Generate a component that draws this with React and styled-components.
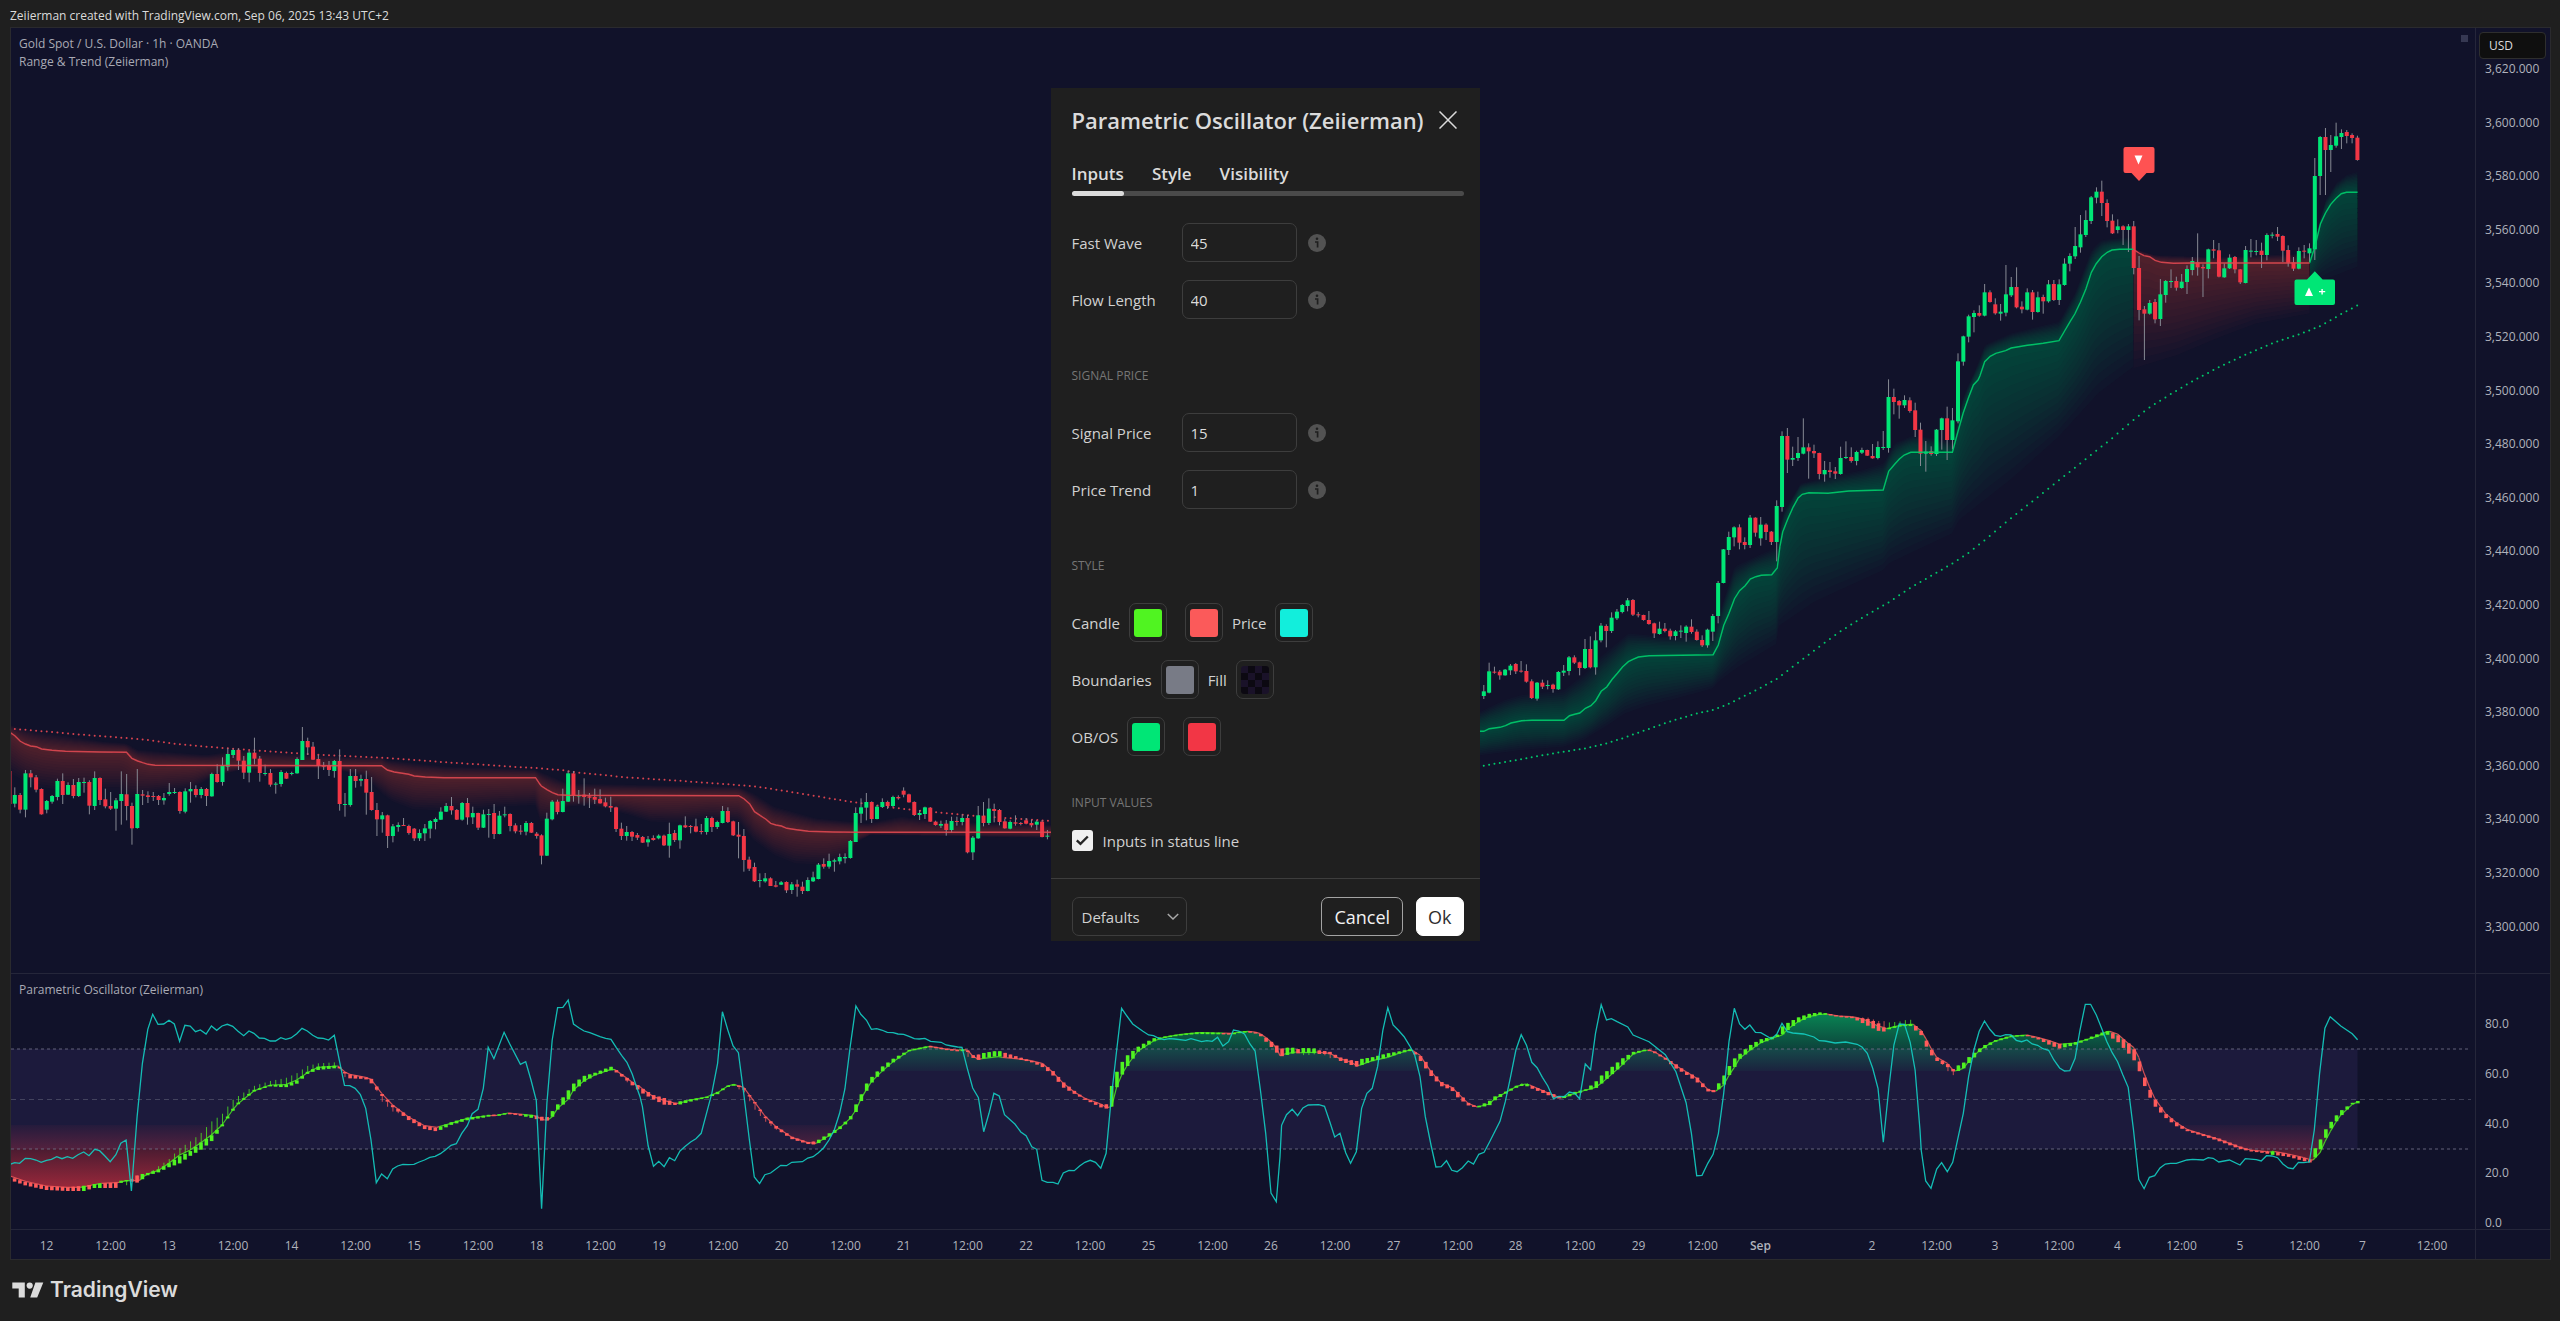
import React, { useState } from 'react';
import styled, { createGlobalStyle } from 'styled-components';

const GlobalStyle = createGlobalStyle`
  * { box-sizing: border-box; }
  body { margin: 0; background: #1f1f1f; font-family: "Open Sans", "Noto Sans", sans-serif; }
  button, input, select { font-family: inherit; }
`;

const UP = '#00e676';
const DOWN = '#f23645';
const OSC_UP = '#4ff321';
const OSC_DOWN = '#ff5b5b';

/* ---------- page frame ---------- */

const Page = styled.div`
  display: grid;
  grid-template-rows: 27px 1fr 61px;
  min-height: 100vh;
`;

const Credit = styled.header`
  display: flex;
  align-items: center;
  padding: 4px 10px 0;
  font-size: 12px;
  line-height: 16px;
  font-weight: 500;
  color: #dbdbdb;
`;

const ChartFrame = styled.main`
  position: relative;
  display: grid;
  grid-template-columns: 1fr 75px;
  grid-template-rows: 945fr 256fr 30px;
  margin: 0 9px 0 10px;
  border: 1px solid #2a2a2e;
  background: #11122a;
`;

const Pane = styled.section`
  position: relative;
  min-height: 0;
  border-top: ${(p) => (p.$divided ? '1px solid #25263a' : 'none')};
`;

const AxisPane = styled(Pane)`
  border-left: 1px solid #25263a;
`;

const Plot = styled.svg`
  position: absolute;
  inset: 0;
  display: block;
  width: 100%;
  height: 100%;
`;

const AxisPlot = styled(Plot)`
  overflow: visible;
`;

const AxisText = styled.text`
  font-family: "Open Sans", "Noto Sans", sans-serif;
  font-size: 12px;
  fill: #b0b2bc;
  font-weight: ${(p) => (p.$strong ? 600 : 500)};
`;

const Legend = styled.div`
  position: absolute;
  top: 7px;
  left: 8px;
  font-size: 12px;
  line-height: 18px;
  font-weight: 500;
  color: #a9aab5;
`;

const CurrencyButton = styled.button`
  position: absolute;
  top: 4px;
  left: 3px;
  width: 67px;
  height: 27px;
  padding: 0 9px;
  border: 1px solid #2e2e2e;
  border-radius: 4px;
  background: #0f0f0f;
  color: #dbdbdb;
  font-size: 12px;
  line-height: 16px;
  font-weight: 500;
  text-align: left;
`;

const PaneMark = styled.span`
  position: absolute;
  top: 7px;
  right: 7px;
  width: 7px;
  height: 7px;
  background: #363852;
`;

const Footer = styled.footer`
  display: flex;
  align-items: center;
  gap: 6px;
  padding: 0 12px 1px;
  color: #dbdbdb;
  font-family: Inter, sans-serif;
  font-size: 21px;
  line-height: 24px;
  font-weight: 600;
`;

/* ---------- settings dialog ---------- */

const Dialog = styled.div`
  position: absolute;
  top: 60px;
  left: calc(50% - 230px);
  width: 429px;
  background: #1f1f1f;
  color: #d1d1d1;
`;

const DialogMain = styled.div`
  padding: 17px 16px 27px 21px;
`;

const TitleRow = styled.div`
  display: flex;
  align-items: center;
  justify-content: space-between;
  padding-right: 7px;
`;

const Title = styled.h1`
  margin: 0;
  font-size: 22px;
  line-height: 30px;
  font-weight: 600;
  color: #dbdbdb;
`;

const CloseButton = styled.button`
  display: flex;
  padding: 0;
  border: 0;
  background: none;
  color: #dbdbdb;
`;

const Tabs = styled.div`
  position: relative;
  display: flex;
  gap: 28px;
  margin: 27px 0 27px;
  &::before {
    content: '';
    position: absolute;
    left: 0;
    right: 0;
    bottom: 0;
    height: 5px;
    border-radius: 3px;
    background: #4a4a4a;
  }
`;

const Tab = styled.button`
  position: relative;
  padding: 0 0 10px;
  border: 0;
  background: none;
  color: #dbdbdb;
  font-size: 17px;
  line-height: 24px;
  font-weight: 600;
  &::after {
    content: '';
    position: absolute;
    left: 0;
    right: 0;
    bottom: 0;
    height: 5px;
    border-radius: 3px;
    background: ${(p) => (p['aria-selected'] ? '#dbdbdb' : 'transparent')};
  }
`;

const Rows = styled.div`
  display: flex;
  flex-direction: column;
  gap: 18px;
`;

const SectionTitle = styled.h2`
  margin: ${(p) => (p.$compact ? '38px 0 18px' : '48px 0 28px')};
  font-size: 12px;
  line-height: 18px;
  font-weight: 500;
  color: #767676;
`;

const FieldRow = styled.div`
  display: grid;
  grid-template-columns: 110px 115px 18px;
  align-items: center;
  column-gap: 0;
  & > svg { margin-left: 11px; }
`;

const Label = styled.label`
  font-size: 15px;
  line-height: 20px;
  font-weight: 500;
`;

const NumberInput = styled.input`
  width: 100%;
  height: 39px;
  padding: 0 8px;
  border: 1px solid #3d3d3d;
  border-radius: 7px;
  background: transparent;
  color: #dbdbdb;
  font-size: 15px;
  font-weight: 500;
`;

const SwatchRow = styled.div`
  display: flex;
  align-items: center;
  gap: 9px;
  font-size: 15px;
  line-height: 20px;
  font-weight: 500;
`;

const Swatch = styled.button`
  display: flex;
  align-items: center;
  justify-content: center;
  width: 38px;
  height: 39px;
  padding: 0;
  border: 1px solid #3d3d3d;
  border-radius: 7px;
  background: none;
  & + & { margin-left: 9px; }
  &::before {
    content: '';
    width: 28px;
    height: 28px;
    border-radius: 3px;
    background: ${(p) => p.$fill};
  }
`;

const CheckLabel = styled.label`
  display: flex;
  align-items: center;
  gap: 10px;
  height: 21px;
  font-size: 15px;
  line-height: 20px;
  font-weight: 500;
`;

const CheckMark = styled.span`
  position: relative;
  width: 21px;
  height: 21px;
  & > svg { position: absolute; inset: 0; pointer-events: none; }
`;

const Checkbox = styled.input`
  appearance: none;
  display: block;
  width: 21px;
  height: 21px;
  margin: 0;
  border-radius: 3px;
  background: #f0f0f0;
`;

const DialogFooter = styled.div`
  display: flex;
  align-items: center;
  gap: 13px;
  padding: 18px 16px 5px 21px;
  border-top: 1px solid #3d3d3d;
`;

const SelectWrap = styled.div`
  position: relative;
  margin-right: auto;
  & > svg { position: absolute; right: 8px; top: 16px; pointer-events: none; }
`;

const Select = styled.select`
  appearance: none;
  display: block;
  width: 115px;
  height: 39px;
  padding: 0 9px;
  border: 1px solid #3d3d3d;
  border-radius: 7px;
  background: transparent;
  color: #d1d1d1;
  font-size: 15px;
  font-weight: 500;
`;

const ActionButton = styled.button`
  height: 39px;
  padding: 0 ${(p) => (p.$primary ? 11 : 12)}px;
  border: 1px solid ${(p) => (p.$primary ? '#ffffff' : '#a3a3a3')};
  border-radius: 7px;
  background: ${(p) => (p.$primary ? '#ffffff' : 'transparent')};
  color: ${(p) => (p.$primary ? '#2e2e2e' : '#f2f2f2')};
  font-size: 18px;
  font-weight: 500;
`;

/* ---------- data ---------- */

const STEP = 5.3255;
const lerp = (a, b, t) => a + (b - a) * t;

/* Each candle: direction, body top, body bottom, wick top, wick bottom (thirds of a unit). */
const CANDLE_RUNS = [
  { x: 14.8, y: 690, bars: `
g315,341,292,352 r315,359,309,370 g250,359,240,382 r250,262,240,292 r262,299,255,307 r297,373,295,374 g333,359,330,370 g318,335,315,341
g273,321,266,331 r273,315,250,342 g285,314,277,315 r285,318,267,325 g276,318,264,321 g276,277,263,308 r276,347,271,373 g264,348,244,360
r264,330,262,345 r328,349,296,355 r348,356,306,360 g331,356,324,422 g312,333,244,404 r313,348,252,391 r348,415,338,464 g312,414,237,416
r313,317,300,345 r316,321,304,339 r318,320,306,333 r318,330,315,345 g324,331,309,344 g306,312,279,317 g306,307,294,312 r306,363,304,371
g304,365,295,370 g297,304,276,338 r297,315,286,322 g297,315,291,325 r297,318,294,348 g252,319,248,320 r252,276,223,278 g227,276,202,287
g192,230,175,242 g180,195,176,204 r180,212,175,240 r212,248,198,267 g188,248,182,277 r188,206,143,223 r206,249,198,275 g249,250,224,257
r249,284,237,290 g281,282,276,311 g246,282,240,290 r249,266,245,267 g249,250,245,256 g207,250,202,251 g153,210,111,210 r153,172,143,195
r170,209,156,210 r207,227,195,267 r227,229,216,240 r226,240,213,258 g213,243,210,263 r213,342,178,362 g342,343,309,380 g258,345,237,350
r258,273,237,293 g267,272,254,289 r267,308,242,374 r306,360,261,362 r360,388,339,438 g376,388,366,428 r376,438,374,474 g409,438,402,457
g405,411,397,425 r405,406,384,407 r408,429,404,434 r416,445,414,453 g429,445,418,453 g415,430,402,453 g393,416,390,445 g387,396,383,418
g365,389,352,390 g348,365,339,366 r348,361,321,374 r360,389,357,390 g339,389,336,392 r339,382,324,404 g369,382,350,402 r369,413,368,420
g373,413,359,414 g372,374,357,443 r369,432,342,447 g377,432,363,433 g373,376,350,382 r372,408,370,424 r406,424,400,430 r422,425,405,434
g399,425,393,436 r399,428,396,429 r431,438,426,446` },
  { x: 541.5, y: 690, bars: `
r436,497,433,523 g386,497,368,498 g335,388,330,391 r335,366,329,373 g333,366,296,367 g250,335,242,336 r250,317,243,335 g316,319,300,341
r314,321,265,347 r319,323,309,354 r321,329,296,342 r327,340,298,341 r337,349,323,352 r348,353,320,366 r352,417,350,426 r416,438,398,450
g426,438,408,452 r426,440,423,453 r435,443,429,450 r441,458,438,459 g448,457,438,470 r444,450,436,452 g437,445,433,448 r437,466,434,468
g432,467,398,503 r429,450,420,456 g406,451,404,476 r406,412,379,414 r408,410,405,430 r409,425,386,427 r423,426,402,433 g384,426,378,434
r384,411,380,426 g396,411,392,417 g363,399,348,400 r363,396,352,399 r394,436,392,438 r434,440,396,505 r438,510,417,545 r509,536,500,543
r531,574,518,576 g570,573,550,592 g565,574,549,578 r565,588,562,588 r586,590,573,592 g577,584,573,585 r576,601,574,609 g583,600,576,612
r583,590,569,620 r590,603,575,612 g570,603,562,604 g562,574,545,576 g524,567,519,568 r522,530,505,536 g513,530,491,536 g511,515,506,545
g501,514,491,523 g501,505,490,520 g453,504,450,506 g369,456,352,456 g352,371,325,399 g336,353,309,391 r336,387,334,399 g350,387,345,388
g336,351,325,354 r336,348,332,357 g321,348,317,352 r321,325,316,329 r302,314,292,322 r313,337,311,338 r336,375,334,378 g369,375,360,390
g352,372,350,387 r353,395,351,396 r395,405,392,407 g402,407,392,414 r401,420,390,437 g393,420,380,428 r393,396,380,407 g384,396,373,406
r384,487,375,490 g443,487,438,510 g376,445,348,446 r377,399,336,409 g356,399,325,405 r357,363,341,397 r360,396,357,406 r394,415,386,416
g396,416,391,418 r397,401,376,407 r399,402,396,406 r391,401,384,403 r399,406,389,412 g395,404,390,420 r395,441,391,442 g437,439,420,448` },
  { x: 1483.8, y: 380, bars: `
g934,948,915,957 g874,938,848,940 r875,878,860,881 r875,886,870,899 g869,886,867,887 g857,871,852,885 r852,874,849,882 r872,875,843,878
r873,905,853,908 r904,954,898,957 g908,956,906,962 r908,920,899,927 g915,917,901,928 r914,927,911,938 g876,928,873,930 g872,878,855,888
g832,873,828,886 r832,848,826,852 r847,864,845,886 g807,864,777,867 r807,862,769,865 g781,862,755,884 g737,781,729,787 r738,753,733,802
g713,753,697,759 g695,715,687,720 g675,696,672,700 g661,678,654,694 r660,704,657,708 r703,706,696,712 r705,720,704,722 r720,732,693,734
r730,760,728,774 g746,762,725,764 r746,753,729,757 r752,769,746,779 g754,768,750,781 g752,755,736,774 g740,759,736,785 r740,756,718,761
r755,780,748,782 r780,796,766,801 g749,796,746,803 g708,755,702,783 g609,708,603,730 g508,609,507,610 g471,510,455,525 g442,472,439,499
r442,488,433,508 r486,495,472,508 g413,495,405,504 r413,458,412,470 g434,475,411,497 r434,456,430,480 r455,486,453,495 g378,486,361,544
g168,381,154,395 r168,239,144,279 g234,239,200,258 g219,234,171,243 g202,221,115,223 r202,214,190,296 r213,220,194,234 r219,282,218,298
g270,283,243,305 r271,276,246,293 r274,281,261,297 g234,282,200,284 g231,234,184,237 r231,243,202,248 g216,243,212,256 g210,218,203,222
r210,227,209,228 r228,235,192,236 g201,234,184,238 g201,204,153,210 g51,204,-2,218 r51,66,26,103 r63,76,60,116 g60,76,46,84
r61,93,52,98 r91,150,68,171 r149,221,128,258 g215,221,183,275 r214,222,199,227 g149,222,147,228 g115,150,113,209 r115,180,80,240
g121,180,84,208` },
  { x: 1958, y: 20, bars: `
g1024,1204,1000,1210 g949,1025,947,1037 g889,950,884,967 g879,891,871,937 r879,887,856,890 g817,887,792,889 r817,846,811,848 r853,880,835,884
g875,881,852,902 g823,878,735,889 g801,826,771,831 r801,862,742,865 r860,868,844,880 g817,869,805,871 r817,876,810,899 g832,876,815,878
r831,844,824,881 g793,844,780,848 r792,840,780,843 g793,840,778,855 g731,795,715,797 g708,731,700,754 g678,709,621,717 g643,682,585,698
g600,645,571,651 g532,603,528,612 g515,533,502,550 r515,549,482,588 r549,603,538,622 r602,640,583,642 g619,630,598,640 r619,630,616,675
g619,630,612,696 r619,744,603,763 r744,870,708,901 r868,881,858,1020 g849,881,840,884 r846,898,837,910 g823,897,777,918 g783,825,780,848
g783,784,748,804 r783,803,770,812 g785,804,762,806 g747,786,736,822 g723,750,711,766 r727,742,640,767 r741,745,733,831 g688,747,686,775
r688,692,660,715 r691,770,669,772 g745,772,730,773 g713,745,703,747 r711,748,708,760 r748,787,747,792 g690,789,678,790 g692,695,657,712
g693,694,660,706 r692,705,668,744 g645,705,640,721 g644,645,637,655 r642,650,621,663 r648,692,646,726 r690,728,676,740 r727,746,711,753
g693,746,682,748 r692,695,675,715 g685,700,670,726 g468,688,414,720 g351,468,348,525 r351,390,324,525 g375,390,345,456 g349,377,308,383
g339,351,328,387 r336,348,330,370 r345,354,340,370 r353,420,347,422` },
];

const candles = CANDLE_RUNS.flatMap((run) =>
  run.bars.trim().split(/\s+/).map((bar, i) => {
    const [top, bottom, high, low] = bar.slice(1).split(',').map((v) => run.y + v / 3);
    return { x: run.x + i * STEP, up: bar[0] === 'g', top, bottom, high, low };
  })
);

/* Turns "x,y x,y ..." traced on a local grid into chart units. */
const trace = (x0, sx, y0, text) =>
  text.trim().split(/\s+/).map((pair) => {
    const [x, y] = pair.split(',').map(Number);
    return [x0 + x / sx, y0 + y / 3];
  });

const A = (t) => trace(0, 2.904, 690, t);
const B = (t) => trace(540, 2.904, 690, t);
const C = (t) => trace(1470, 2.904, 380, t);
const D = (t) => trace(1940, 2.529, 20, t);

const yAt = (pts, x) => {
  if (x <= pts[0][0]) return pts[0][1];
  for (let i = 1; i < pts.length; i += 1) {
    if (x <= pts[i][0]) {
      const [xa, ya] = pts[i - 1];
      const [xb, yb] = pts[i];
      return xb === xa ? yb : lerp(ya, yb, (x - xa) / (xb - xa));
    }
  }
  return pts[pts.length - 1][1];
};

const TRENDS = [
  {
    up: false,
    line: [
      ...A('30,128 43,137 59,154 74,162 89,168 105,170 121,177 151,181 190,184 290,186 367,187 383,205 400,213 414,218 430,223 450,226 1108,227 1125,240 1145,246 1187,253 1203,258 1235,261 1290,263 1555,263'),
      ...B('0,283 4,288 20,299 36,308 52,314 80,316 577,317 593,327 609,342 623,365 640,377 655,387 670,400 685,405 701,408 717,415 745,419 779,424 850,426 917,427 1520,427'),
    ],
    lower: [
      ...A('30,250 74,275 105,290 180,300 350,300 367,325 450,310 560,295 620,260 700,240 900,235 980,240 1060,260 1108,310 1140,335 1200,358 1300,362 1450,350 1555,345'),
      ...B('0,395 36,390 80,350 150,345 260,375 320,395 400,398 500,385 577,395 620,450 680,495 740,520 830,525 900,500 917,460 960,435 1520,445'),
    ],
    upper: [
      ...A('30,105 105,125 300,155 367,160 400,180 600,195 700,180 1000,200 1108,200 1125,210 1300,230 1555,238'),
      ...B('0,245 80,280 300,285 577,290 620,310 680,350 800,385 950,400 1050,380 1150,392 1300,400 1520,405'),
    ],
  },
  {
    up: true,
    line: [
      ...C('0,1054 40,1054 56,1046 87,1042 103,1037 119,1029 150,1022 180,1021 273,1021 289,1007 304,1003 319,999 335,985 351,977 365,962 381,934 397,921 413,898 428,880 443,861 460,845 473,838 489,831 520,827 706,824 721,795 737,736 752,700 768,656 783,632 799,617 814,597 830,590 846,586 876,584 892,564 900,500 908,456 922,419 938,382 953,354 965,343 984,338 1040,340 1100,333 1200,330 1216,274 1232,254 1247,237 1261,225 1280,217 1401,217 1408,190 1417,155 1432,100 1447,55 1462,15'),
      ...D('96,1080 101,1068 113,1025 127,1009 141,1000 166,992 180,984 221,976 261,970 301,962 315,933 329,905 341,882 355,847 369,807 383,757 395,731 409,710 423,697 435,690 455,688 489,688'),
    ],
    lower: [
      ...C('0,1130 150,1110 273,1100 330,1080 400,1035 450,1000 520,975 600,955 706,925 721,905 780,860 892,790 894,740 1000,665 1200,570 1216,550 1400,460 1420,420'),
      ...D('177,1380 300,1250 400,1120 489,1040'),
    ],
    upper: [
      ...C('0,1010 100,960 150,945 273,930 335,880 380,830 460,760 560,770 706,770 721,710 768,560 830,530 892,500 908,400 960,310 1140,270 1201,250 1232,190 1290,165 1400,185 1432,50'),
      ...D('96,1030 113,975 180,940 301,905 341,820 383,690 409,660 489,650'),
    ],
  },
  {
    up: false,
    line: D('489,688 503,699 516,707 530,710 544,721 560,727 590,730 640,729 935,729'),
    lower: D('489,1045 600,1005 700,955 800,910 935,880'),
    upper: D('489,685 544,705 700,712 935,700'),
  },
  {
    up: true,
    line: D('935,728 948,680 962,612 975,579 988,553 1002,535 1015,521 1028,517 1056,517'),
    lower: D('935,780 936,800 948,790 1056,740'),
    upper: D('935,700 948,650 975,540 1002,490 1028,465 1056,455'),
  },
];

const DOTTED = [
  { color: '#d8434f', pts: [
    ...A('43,117 105,122 182,129 260,136 367,144 430,150 507,161 600,170 738,181 862,190 940,195 1050,200 1125,204 1218,211 1311,218 1403,224 1500,231 1559,234'),
    ...B('4,235 67,241 113,248 250,262 400,272 547,283 623,289 700,301 840,325 933,340 1042,355 1150,367 1242,376 1350,384 1473,392'),
  ] },
  { color: '#00c86b', pts: [
    ...C('40,1157 119,1143 243,1120 335,1105 397,1090 443,1075 505,1052 582,1024 660,1000 706,990 752,971 830,931 892,896 953,848 1016,799 1077,753 1154,704 1216,667 1278,624 1340,587 1402,550 1447,519 1494,481 1556,427'),
    ...D('435,1255 489,1200 530,1162 584,1122 638,1084 706,1041 772,1004 840,970 920,938 962,918 1015,882 1056,856'),
  ] },
];

const O = (day, t) => trace(day, 2.45, 970, t);

const priceWave = [
  ...O(0, '25,583 36,578 48,580 62,565 75,566 88,570 101,577 114,571 126,568 139,560 152,566 165,560 178,565 191,554 205,546 218,557 232,538 244,542 257,558 270,575 284,554 296,520 309,510 322,663 336,440 349,280 362,178 374,133 387,163 401,162 414,151 427,162 440,214 453,166 466,168 479,185 491,180 505,192 518,168 531,181 544,168 557,163 570,169 583,184 597,197 610,183 622,190 635,204 648,205 662,213 675,213 688,203 700,208 713,204 727,191 740,175 753,183 766,196 779,204 792,205 805,210 819,196 832,275 844,346 857,347 870,355 883,374 896,415 909,510 922,638 935,612 949,626 962,597 974,588 987,583 1000,584 1014,583 1027,576 1040,570 1053,562 1066,559 1079,551 1092,539 1105,526 1118,521 1131,491 1145,467 1157,431 1171,418 1184,355 1196,232 1210,266 1235,187 1248,220 1275,283 1288,275 1301,330 1314,392 1327,716 1340,400 1353,210 1366,113 1379,112 1392,90 1405,162 1418,173 1431,183 1445,188 1470,200 1484,205 1497,208 1510,233 1523,256 1536,277 1549,312 1558,345'),
  ...O(640, '0,380 6,410 20,528 33,589 46,574 59,590 72,563 85,572 98,543 111,529 124,516 137,506 150,490 163,430 176,370 190,280 202,125 215,180 228,228 241,248 254,370 268,510 280,621 293,641 306,614 320,609 345,586 359,587 372,577 398,575 411,564 424,560 437,548 450,533 463,510 476,480 489,430 502,357 515,230 529,108 541,133 555,151 567,178 580,176 592,180 606,187 620,188 632,192 646,193 659,199 672,206 684,207 698,205 712,214 738,217 750,225 764,228 778,231 789,232 802,295 815,354 829,383 842,485 855,430 867,370 880,378 893,434 919,463 933,486 946,497 960,530 972,538 985,631 998,637 1012,637 1024,642 1037,609 1051,601 1064,602 1077,588 1090,577 1103,571 1116,577 1129,595 1142,550 1155,380 1168,240 1180,115 1193,138 1207,162 1232,184 1246,195 1258,197 1271,205 1284,209 1297,206 1310,207 1337,211 1350,206 1376,215 1389,212 1402,214 1415,202 1428,228 1442,215 1454,180 1467,183 1481,192 1494,221 1507,243 1520,360 1533,490 1546,669 1559,695'),
  ...O(1280, '0,560 4,466 16,434 30,418 43,437 56,414 69,405 95,404 109,409 122,455 134,501 147,490 161,548 173,580 187,545 200,415 213,370 226,355 239,290 252,180 264,113 277,165 290,181 304,200 317,226 330,255 343,320 356,440 370,525 382,591 395,590 408,572 421,601 434,605 447,593 461,573 474,582 487,553 500,547 513,517 539,454 552,395 565,320 578,240 591,194 604,226 617,277 630,293 643,322 656,348 670,386 683,379 696,380 709,366 722,370 734,386 748,282 761,299 773,190 787,104 800,150 812,146 826,155 852,171 865,195 904,215 918,229 944,254 970,305 995,398 1008,490 1021,617 1034,616 1048,580 1061,553 1074,490 1087,370 1100,215 1113,115 1126,162 1139,178 1151,165 1165,187 1178,188 1204,206 1217,193 1230,160 1243,185 1256,189 1283,192 1308,201 1321,212 1335,213 1360,219 1386,216 1414,223 1426,231 1439,250 1452,295 1465,355 1478,517 1492,350 1504,225 1517,162 1530,163 1544,217 1556,300'),
  ...O(1920, '0,480 3,540 14,633 27,655 41,597 53,578 67,605 80,577 106,430 119,320 132,240 145,184 158,153 171,178 184,196 197,199 210,194 223,195 236,211 249,215 262,210 275,222 288,226 301,236 315,241 328,270 342,294 354,303 367,302 380,265 392,180 405,103 418,103 432,135 445,175 458,215 471,248 484,275 497,315 510,352 523,480 536,628 549,656 562,622 575,617 588,594 601,582 614,580 628,580 654,570 668,568 694,570 706,563 718,565 732,576 758,570 784,585 797,566 824,569 836,573 849,557 862,558 876,563 889,582 902,594 914,596 927,577 940,578 954,576 966,480 979,310 992,175 1005,140 1031,168 1059,191 1072,209'),
];

/* Oscillator keys: x, y, direction from here on, body top offset, body bottom offset, wick offset. */
const waveKeys = [
  [0, '25,618,r,2,12 62,634,r,2,12 114,648,r,0,12 165,652,r,0,11 198,652,g,-4,11 211,649,r,-2,14 226,645,g,-2,9 249,640,r,0,14 284,638,r,0,16 293,637,g,-4,3 309,632,g,-2,2,16 320,632,r,-2,2 328,632,r,-10,4 337,632,r,-16,6,18 344,630,g,-16,-1 349,622,g,-10,6 362,612,g,-3,4 387,602,g,-3,6,-12 414,580,g,0,12,-12 440,555,g,4,26,-20 466,540,g,4,18,-25 492,518,g,0,22,-28 518,495,g,2,20,-40 544,465,g,0,6,-32 570,420,g,-2,4,-30 583,401,g,-2,3,-22 622,363,g,-3,2,-15 662,345,g,0,4,-12 700,344,g,0,8,-20 727,330,g,2,12,-20 753,308,g,-2,4,-20 779,292,g,-2,8,-12 819,289,g,-2,6,-12 828,288,r,-2,2 845,306,r,0,3,14 857,313,r,0,12 896,322,r,0,5 909,328,r,-4,10 935,370,r,0,6,22 962,405,r,0,6,18 1000,440,r,-3,9 1040,467,r,0,10 1070,472,r,2,12 1076,470,g,2,12 1105,460,g,-3,5 1145,445,g,-2,6 1190,438,g,-2,4 1200,437,r,-3,2 1218,436,g,-2,2 1245,429,r,-1,2 1280,433,g,0,5 1308,437,r,-2,8 1334,450,r,-8,4 1343,449,g,-8,2 1353,440,g,-15,2 1366,415,g,-10,5 1392,388,g,-25,2 1405,360,g,-18,5 1431,332,g,-14,4 1457,315,g,-6,2 1497,298,g,-8,3 1507,299,r,-2,5 1536,325,r,-2,6,12 1558,345,r,-2,10'],
  [640, '0,350,r,-2,12 7,358,r,-2,12 33,380,r,-5,8 60,392,r,-8,12 85,399,r,0,6 94,400,g,-5,5 124,390,g,-2,5 163,381,g,0,3 190,368,g,-2,5 215,348,g,-1,2 230,343,g,0,3 237,346,r,-2,2,10 254,352,r,0,3,10 280,395,r,-2,2,22 306,438,r,0,4,14 333,470,r,-3,5,10 372,502,r,-2,5 411,518,r,-2,4 432,520,g,-6,4 463,497,g,-6,4 489,474,g,-3,5 515,445,g,-2,6 529,420,g,-15,8 542,385,g,-10,10 555,358,g,-16,6 567,335,g,-12,5 592,305,g,-13,2 620,275,g,-8,3 659,242,g,-2,2 710,229,r,-2,3 750,237,r,-1,2 780,240,g,0,2 795,239,r,0,3 803,241,r,0,3,18 815,258,r,-2,5,5 829,268,r,-14,2,6 837,266,g,-16,0,10 878,260,g,-18,-2,12 888,262,r,-16,-1,10 920,266,r,-8,0 958,272,r,0,4 985,280,r,0,10 1010,305,r,-5,8 1037,340,r,-4,12 1064,366,r,-4,5 1090,385,r,0,3 1129,402,r,0,10 1142,412,r,-2,4 1150,412,g,-60,2 1156,408,g,-60,2 1168,350,g,-42,5 1180,315,g,-36,3 1194,285,g,-28,5 1220,243,g,-12,3 1258,213,g,-8,2 1284,202,g,-2,2 1320,194,g,-1,2 1370,188,g,-2,4 1415,189,g,-1,4 1430,189,r,0,3 1450,190,g,0,4 1470,186,g,-1,2 1490,184,r,-1,2 1507,186,r,0,3 1520,191,r,0,6 1535,204,r,0,12 1550,220,r,-2,14 1562,240,r,-12,10'],
  [1280, '0,257,r,-20,2 11,252,g,-18,6,18 30,248,g,-16,2,20 40,246,r,-6,6 50,248,g,-14,0,20 83,247,g,-12,2,18 90,246,r,-6,6 122,250,r,-5,2,18 147,266,r,-4,6 173,276,r,-6,8 187,286,r,-12,4,18 194,286,g,-18,2,8 226,272,g,-10,2,4 264,262,g,-12,0 290,250,g,-5,2 317,240,g,-3,3 326,242,r,0,3 343,256,r,0,14 356,280,r,-8,12 370,305,r,-5,12 395,340,r,-5,8 421,352,r,-2,8 434,368,r,-5,12 461,400,r,-2,6 483,411,g,-1,2 513,402,g,-8,5 526,386,g,-6,6 552,368,g,-2,4 578,350,g,-2,4 600,342,g,-2,3,-8 612,345,r,0,8 643,362,r,-3,6 670,376,r,-4,6,8 690,384,g,-3,3 722,370,g,-4,4 750,360,g,-2,2 773,352,g,-15,4 787,340,g,-22,2 813,312,g,-20,2 839,284,g,-18,2 865,252,g,-6,2 890,242,g,-2,2 903,240,r,-2,2 918,246,r,-2,3 944,265,r,-2,3 970,287,r,-5,8 995,305,r,0,8 1021,325,r,-5,10 1048,358,r,-2,6 1061,364,r,-2,3 1068,363,g,-10,2 1087,345,g,-25,2 1100,316,g,-25,2 1113,292,g,-25,2 1126,265,g,-12,3 1152,240,g,-14,2 1178,218,g,-10,2 1204,205,g,-4,4 1217,200,g,-2,2 1230,195,g,-24,0 1243,178,g,-18,4 1269,155,g,-12,3 1295,140,g,-8,4 1321,133,g,-6,2 1340,132,r,-2,2 1370,138,r,-1,2 1400,140,r,0,2 1414,143,r,0,8 1439,152,r,-6,14,-10 1465,168,r,-10,14,-15 1478,172,r,0,14,-20 1486,176,g,0,4,-18 1517,167,g,-2,3,-12 1544,163,g,0,4,-16 1552,163,r,-3,12 1566,178,r,0,12'],
  [1920, '2,180,r,0,12 14,205,r,2,20 27,235,r,0,18 41,262,r,0,10 67,280,r,0,10,20 80,299,r,0,4,18 86,303,g,-12,4,14 106,295,g,-15,2 119,275,g,-12,6 145,242,g,-5,6 158,230,g,-4,6 184,213,g,-2,3 223,199,g,-3,3 250,196,g,-1,2 262,195,r,-1,3 288,202,r,0,5 315,211,r,0,12 341,222,r,0,14 348,222,g,0,12 380,219,g,-2,6 405,210,g,-2,3 432,200,g,-6,2 458,185,g,-2,7 465,184,r,2,16 484,192,r,2,22 510,220,r,-2,28 523,232,r,0,34 536,262,r,4,34,20 549,310,r,6,32 562,350,r,4,28 575,385,r,0,22 601,430,r,0,12 628,458,r,-2,10 654,478,r,0,5 694,494,r,-2,4 732,508,r,-3,5 784,532,r,-3,5 810,540,r,0,4 849,545,r,0,5 857,546,g,-2,8,-10 869,545,r,0,10 902,552,r,0,8 940,563,r,0,10 958,570,r,0,8 963,570,g,-24,2 980,548,g,-35,-5 992,515,g,-32,-5 1005,485,g,-25,-5 1018,458,g,-18,0 1031,435,g,-12,4 1059,403,g,-4,0 1072,396,g,-3,4'],
].flatMap(([origin, text]) =>
  text.split(' ').map((key) => {
    const [x, y, dir, a, b, w = 0] = key.split(',');
    return { x: origin + x / 2.45, y: 970 + y / 3, up: dir === 'g', a: a / 3, b: b / 3, w: w / 3 };
  })
);

const waveBars = Array.from({ length: 441 }, (_, i) => {
  const x = 14.8 + i * STEP;
  let k = 0;
  while (k < waveKeys.length - 2 && waveKeys[k + 1].x <= x) k += 1;
  const p = waveKeys[k];
  const q = waveKeys[k + 1];
  const t = Math.min(1, Math.max(0, (x - p.x) / (q.x - p.x)));
  const at = (name) => lerp(p[name], q[name], t);
  return { x, up: p.up, y: at('y'), a: at('a'), b: at('b'), w: at('w') };
});

const TIMES = [
  ['12', 46.5], ['12:00', 110.5], ['13', 169], ['12:00', 233], ['14', 291.5], ['12:00', 355.5], ['15', 414], ['12:00', 478],
  ['18', 536.5], ['12:00', 600.5], ['19', 659], ['12:00', 723], ['20', 781.5], ['12:00', 845.5], ['21', 903.5], ['12:00', 967.5],
  ['22', 1026], ['12:00', 1090], ['25', 1148.5], ['12:00', 1212.5], ['26', 1271], ['12:00', 1335], ['27', 1393.5], ['12:00', 1457.5],
  ['28', 1515.5], ['12:00', 1580], ['29', 1638.5], ['12:00', 1702.5], ['Sep', 1760.5], ['2', 1872], ['12:00', 1936.5], ['3', 1995],
  ['12:00', 2059], ['4', 2117.5], ['12:00', 2181.5], ['5', 2240], ['12:00', 2304.5], ['7', 2362.5], ['12:00', 2432],
];

const pct = (value, total) => `${((value / total) * 100).toFixed(3)}%`;
const toPoints = (pts) => pts.map((p) => `${p[0].toFixed(1)},${p[1].toFixed(1)}`).join(' ');

/* ---------- chart parts ---------- */

const LAYERS = 14;

function GlowBand({ line, edge, up }) {
  const first = line[0][0];
  const last = line[line.length - 1][0];
  const xs = [];
  for (let x = first; x < last; x += STEP / 2) xs.push(x);
  xs.push(last);
  const base = xs.map((x) => [x, yAt(line, x)]);
  return Array.from({ length: LAYERS }, (_, k) => {
    const far = base.map(([x, y]) => [x, lerp(y, yAt(edge, x), (k + 1) / LAYERS)]).reverse();
    return (
      <polygon key={k} points={toPoints([...base, ...far])} fill={up ? UP : '#ff5252'} fillOpacity={up ? 0.025 : 0.023} />
    );
  });
}

function DottedLine({ pts, color }) {
  const dots = [];
  const last = pts[pts.length - 1][0];
  for (let x = pts[0][0]; x <= last + 1; x += STEP) dots.push([x, yAt(pts, x)]);
  return dots.map(([x, y]) => <circle key={x} cx={x} cy={y} r="1" fill={color} />);
}

function PricePlot() {
  return (
    <Plot viewBox="11 28 2464 945" preserveAspectRatio="none" role="img" aria-label="Gold Spot price chart">
      {TRENDS.map((t, i) => (
        <g key={i}>
          <GlowBand line={t.line} edge={t.lower} up={t.up} />
          <GlowBand line={t.line} edge={t.upper} up={t.up} />
        </g>
      ))}
      {DOTTED.map((d) => <DottedLine key={d.color} {...d} />)}
      <rect x="9" y="771" width="2.5" height="33" fill={DOWN} />
      {candles.map((c) => (
        <g key={c.x}>
          <rect x={c.x - 0.5} y={c.high} width="1" height={c.low - c.high} fill="#868993" />
          <rect x={c.x - 2} y={c.top} width="4" height={Math.max(1, c.bottom - c.top)} fill={c.up ? UP : DOWN} />
        </g>
      ))}
      {TRENDS.map((t, i) => (
        <polyline key={i} points={toPoints(t.line)} fill="none" stroke={t.up ? '#00cf6d' : '#e04a52'} strokeWidth="1.4" strokeOpacity="0.9" />
      ))}
      <path d="M2125.5 147H2152.5Q2154.5 147 2154.5 149V171Q2154.5 173 2152.5 173H2146.5L2139 181L2131.5 173H2125.5Q2123.5 173 2123.5 171V149Q2123.5 147 2125.5 147Z" fill="#ff5252" />
      <path d="M2134.5 155.5H2142.5L2138.5 164.5Z" fill="#ffffff" />
      <path d="M2296.5 279.5H2307L2314.8 271.3L2322.6 279.5H2333Q2335 279.5 2335 281.5V303Q2335 305 2333 305H2296.5Q2294.5 305 2294.5 303V281.5Q2294.5 279.5 2296.5 279.5Z" fill={UP} />
      <path d="M2309 287.5L2313 296H2305ZM2321.4 289H2322.8V290.9H2325.2V292.3H2322.8V294.4H2321.4V292.3H2319V290.9H2321.4Z" fill="#ffffff" />
    </Plot>
  );
}

function OscillatorPlot() {
  const curve = toPoints(waveKeys.map((k) => [k.x, k.y]));
  return (
    <Plot viewBox="11 974 2464 255" preserveAspectRatio="none" role="img" aria-label="Parametric Oscillator">
      <defs>
        <linearGradient id="overbought" gradientUnits="userSpaceOnUse" x1="0" y1="1071" x2="0" y2="1012">
          <stop offset="0" stopColor={UP} stopOpacity="0.04" />
          <stop offset="1" stopColor={UP} stopOpacity="0.55" />
        </linearGradient>
        <linearGradient id="oversold" gradientUnits="userSpaceOnUse" x1="0" y1="1125" x2="0" y2="1187">
          <stop offset="0" stopColor={DOWN} stopOpacity="0.04" />
          <stop offset="1" stopColor={DOWN} stopOpacity="0.6" />
        </linearGradient>
        <clipPath id="above"><rect x="11" y="974" width="2464" height="97" /></clipPath>
        <clipPath id="below"><rect x="11" y="1125" width="2464" height="104" /></clipPath>
      </defs>
      <rect x="11" y="1049" width="2346.5" height="100" fill="#1c1a3c" />
      <g clipPath="url(#above)">
        <polygon points={`10,1071 ${curve} 2357.5,1071`} fill="url(#overbought)" />
      </g>
      <g clipPath="url(#below)">
        <polygon points={`10,1125 ${curve} 2357.5,1125`} fill="url(#oversold)" />
      </g>
      <g stroke="#6a6b80" strokeOpacity="0.6">
        <path d="M11 1049H2471M11 1149H2471" strokeWidth="1.6" strokeDasharray="3 3" />
        <path d="M11 1099.5H2471" strokeWidth="1" strokeDasharray="5 4" strokeOpacity="0.5" />
      </g>
      {waveKeys.slice(1).map((k, i) => (
        <line key={k.x} x1={waveKeys[i].x} y1={waveKeys[i].y} x2={k.x} y2={k.y} stroke={waveKeys[i].up ? OSC_UP : OSC_DOWN} strokeWidth="1.2" strokeOpacity="0.8" />
      ))}
      {waveBars.map((b) => (
        <g key={b.x} fill={b.up ? OSC_UP : OSC_DOWN}>
          <rect x={b.x - 2} y={b.y + b.a} width="3.6" height={Math.max(1.4, b.b - b.a)} />
          <rect x={b.x - 0.5} y={b.y + Math.min(b.w, b.a)} width="1" height={Math.abs(b.w) + 0.5} fillOpacity="0.75" />
        </g>
      ))}
      <polyline points={toPoints(priceWave)} fill="none" stroke="#14cfc3" strokeWidth="1.3" strokeOpacity="0.9" />
    </Plot>
  );
}

const InfoIcon = () => (
  <svg width="18" height="18" viewBox="0 0 18 18" aria-hidden="true">
    <circle cx="9" cy="9" r="9" fill="#525252" />
    <circle cx="9" cy="4.8" r="1.3" fill="#1f1f1f" />
    <path d="M7 8H9.6V13.5" fill="none" stroke="#1f1f1f" strokeWidth="1.7" />
  </svg>
);

function Field({ id, label, value }) {
  return (
    <FieldRow>
      <Label htmlFor={id}>{label}</Label>
      <NumberInput id={id} type="text" inputMode="numeric" defaultValue={value} />
      <InfoIcon />
    </FieldRow>
  );
}

function SettingsDialog() {
  const [tab, setTab] = useState('Inputs');
  return (
    <Dialog role="dialog" aria-labelledby="dialog-title">
      <DialogMain>
        <TitleRow>
          <Title id="dialog-title">Parametric Oscillator (Zeiierman)</Title>
          <CloseButton aria-label="Close">
            <svg width="18" height="18" viewBox="0 0 18 18">
              <path d="M0.5 0.5L17.5 17.5M17.5 0.5L0.5 17.5" stroke="currentColor" strokeWidth="1.5" />
            </svg>
          </CloseButton>
        </TitleRow>
        <Tabs role="tablist">
          {['Inputs', 'Style', 'Visibility'].map((name) => (
            <Tab key={name} role="tab" aria-selected={tab === name} onClick={() => setTab(name)}>{name}</Tab>
          ))}
        </Tabs>
        <Rows>
          <Field id="fast-wave" label="Fast Wave" value="45" />
          <Field id="flow-length" label="Flow Length" value="40" />
        </Rows>
        <SectionTitle>SIGNAL PRICE</SectionTitle>
        <Rows>
          <Field id="signal-price" label="Signal Price" value="15" />
          <Field id="price-trend" label="Price Trend" value="1" />
        </Rows>
        <SectionTitle>STYLE</SectionTitle>
        <Rows>
          <SwatchRow>
            <span>Candle</span>
            <Swatch aria-label="Candle up color" $fill="#50f421" />
            <Swatch aria-label="Candle down color" $fill="#fb5a5a" />
            <span>Price</span>
            <Swatch aria-label="Price color" $fill="#12eedc" />
          </SwatchRow>
          <SwatchRow>
            <span>Boundaries</span>
            <Swatch aria-label="Boundaries color" $fill="#787b86" />
            <span>Fill</span>
            <Swatch aria-label="Fill color" $fill="repeating-conic-gradient(#0c0912 0 25%, #1a1229 0 50%) 0 0 / 14px 14px" />
          </SwatchRow>
          <SwatchRow>
            <span>OB/OS</span>
            <Swatch aria-label="Overbought color" $fill="#00e676" />
            <Swatch aria-label="Oversold color" $fill="#f23645" />
          </SwatchRow>
        </Rows>
        <SectionTitle $compact>INPUT VALUES</SectionTitle>
        <CheckLabel>
          <CheckMark>
            <Checkbox type="checkbox" defaultChecked />
            <svg width="21" height="21" viewBox="0 0 21 21" aria-hidden="true">
              <path d="M4.8 10.3L8.5 13.8L15.8 6.5" fill="none" stroke="#262626" strokeWidth="2.4" />
            </svg>
          </CheckMark>
          Inputs in status line
        </CheckLabel>
      </DialogMain>
      <DialogFooter>
        <SelectWrap>
          <Select aria-label="Defaults" defaultValue="Defaults">
            <option>Defaults</option>
          </Select>
          <svg width="12" height="8" viewBox="0 0 12 8" aria-hidden="true">
            <path d="M0.8 1L6 6L11.2 1" fill="none" stroke="#a8a8a8" strokeWidth="1.5" />
          </svg>
        </SelectWrap>
        <ActionButton>Cancel</ActionButton>
        <ActionButton $primary>Ok</ActionButton>
      </DialogFooter>
    </Dialog>
  );
}

export default function App() {
  return (
    <>
      <GlobalStyle />
      <Page>
        <Credit>Zeiierman created with TradingView.com, Sep 06, 2025 13:43 UTC+2</Credit>
        <ChartFrame>
          <Pane>
            <PricePlot />
            <Legend>
              <div>Gold Spot / U.S. Dollar · 1h · OANDA</div>
              <div>Range &amp; Trend (Zeiierman)</div>
            </Legend>
            <PaneMark />
          </Pane>
          <AxisPane>
            <AxisPlot>
              {Array.from({ length: 17 }, (_, i) => (
                <AxisText key={i} x="9" y={pct(45 + i * 53.6, 945)}>
                  {(3620 - i * 20).toLocaleString('en-US', { minimumFractionDigits: 3 })}
                </AxisText>
              ))}
            </AxisPlot>
            <CurrencyButton>USD</CurrencyButton>
          </AxisPane>
          <Pane $divided>
            <OscillatorPlot />
            <Legend>Parametric Oscillator (Zeiierman)</Legend>
          </Pane>
          <AxisPane $divided>
            <AxisPlot>
              {[80, 60, 40, 20, 0].map((v, i) => (
                <AxisText key={v} x="9" y={pct(54 + i * 49.8, 255)}>{v.toFixed(1)}</AxisText>
              ))}
            </AxisPlot>
          </AxisPane>
          <Pane $divided>
            <AxisPlot>
              {TIMES.map(([label, x]) => (
                <AxisText key={x} x={pct(x - 11, 2464)} y="20" textAnchor="middle" $strong={label === 'Sep'}>{label}</AxisText>
              ))}
            </AxisPlot>
          </Pane>
          <AxisPane $divided />
          <SettingsDialog />
        </ChartFrame>
        <Footer>
          <svg width="32" height="16" viewBox="0 0 32 16" aria-hidden="true">
            <path d="M0.3 0.5H12.8V15.5H6.7V6.6H0.3Z M23.4 0.5H31.3L25.2 15.5H18.2Z" fill="currentColor" />
            <circle cx="17.7" cy="3.6" r="3.1" fill="currentColor" />
          </svg>
          TradingView
        </Footer>
      </Page>
    </>
  );
}
